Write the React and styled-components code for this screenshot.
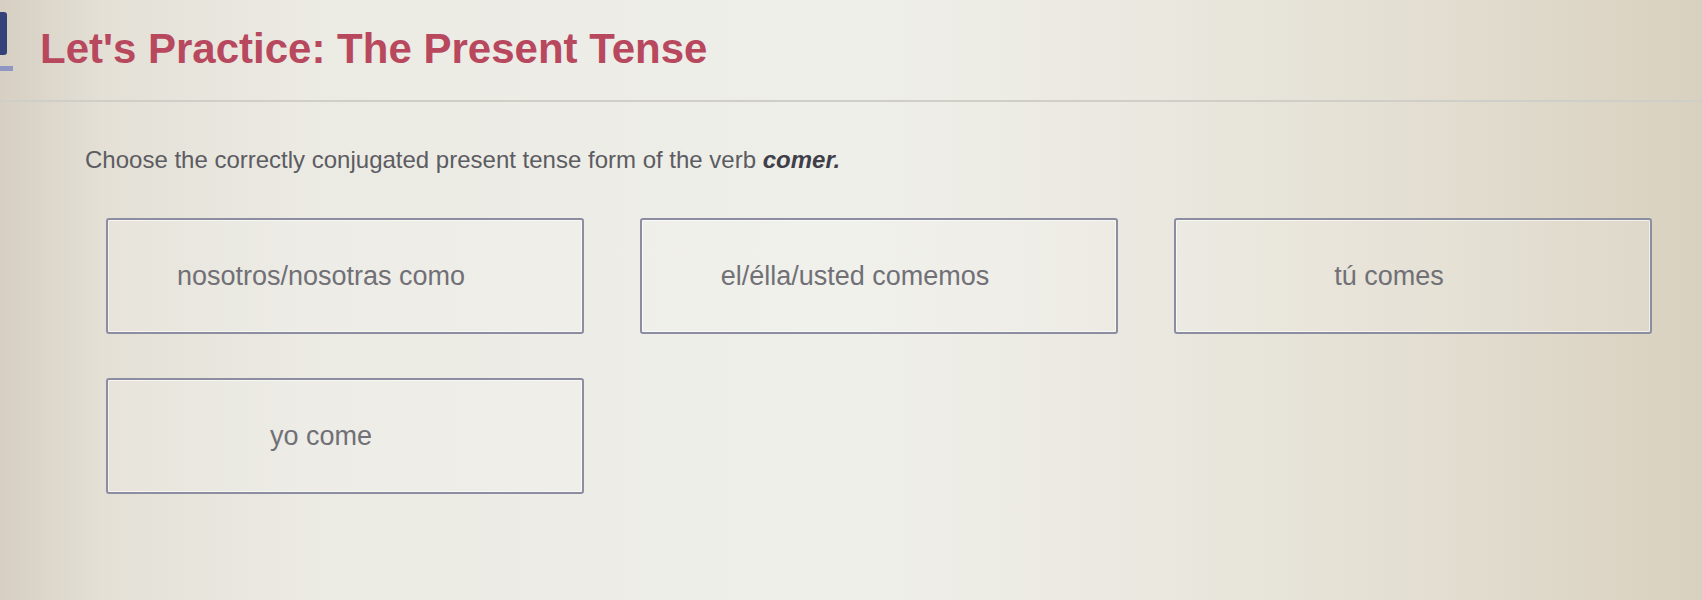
import styled, { createGlobalStyle } from 'styled-components'

const GlobalStyle = createGlobalStyle`
  html, body {
    margin: 0;
    padding: 0;
  }
  body {
    font-family: "Liberation Sans", Arial, sans-serif;
  }
`

const Page = styled.div`
  width: 1702px;
  height: 600px;
  overflow: hidden;
  background: linear-gradient(
    90deg,
    #d6cfc2 0%,
    #e4e0d6 6%,
    #ebeae3 18%,
    #efefea 50%,
    #eae8df 68%,
    #e3ded1 84%,
    #d8d1bf 100%
  );
`

const Header = styled.header`
  height: 102px;
  display: flex;
  align-items: flex-start;
  padding-top: 12px;
  box-sizing: border-box;
  border-bottom: 2px solid #cfcec7;
`

const SideMark = styled.div`
  display: flex;
  flex-direction: column;
  gap: 11px;
  width: 13px;
  margin-right: 27px;
`

const MarkBar = styled.div`
  width: 7px;
  height: 43px;
  background: #34427a;
  border-radius: 0 3px 3px 0;
`

const MarkDash = styled.div`
  width: 13px;
  height: 5px;
  background: #9096c4;
`

const Title = styled.h1`
  margin: 12px 0 0;
  font-size: 42px;
  line-height: 50px;
  font-weight: 700;
  color: #b8485e;
`

const Prompt = styled.p`
  margin: 44px 0 0 85px;
  font-size: 24px;
  line-height: 28px;
  color: #5c5c62;
`

const Verb = styled.span`
  font-weight: 700;
  font-style: italic;
  color: #3f3f49;
`

const Choices = styled.div`
  display: grid;
  grid-template-columns: repeat(3, 478px);
  column-gap: 56px;
  row-gap: 44px;
  margin: 44px 0 0 106px;
`

const Choice = styled.button`
  height: 116px;
  display: flex;
  align-items: center;
  justify-content: center;
  padding: 0 48px 0 0;
  background: rgba(255, 255, 255, 0.12);
  border: 2px solid #8d8da2;
  border-radius: 3px;
  box-shadow: inset 0 0 0 1px rgba(255, 255, 255, 0.6);
  font-family: "Liberation Sans", Arial, sans-serif;
  font-size: 27px;
  color: #707076;
  cursor: pointer;
`

const OPTIONS = [
  'nosotros/nosotras como',
  'el/élla/usted comemos',
  'tú comes',
  'yo come',
]

export default function App() {
  return (
    <Page>
      <GlobalStyle />
      <Header>
        <SideMark>
          <MarkBar />
          <MarkDash />
        </SideMark>
        <Title>Let's Practice: The Present Tense</Title>
      </Header>
      <Prompt>
        Choose the correctly conjugated present tense form of the verb <Verb>comer.</Verb>
      </Prompt>
      <Choices>
        {OPTIONS.map((text) => (
          <Choice key={text}>{text}</Choice>
        ))}
      </Choices>
    </Page>
  )
}
